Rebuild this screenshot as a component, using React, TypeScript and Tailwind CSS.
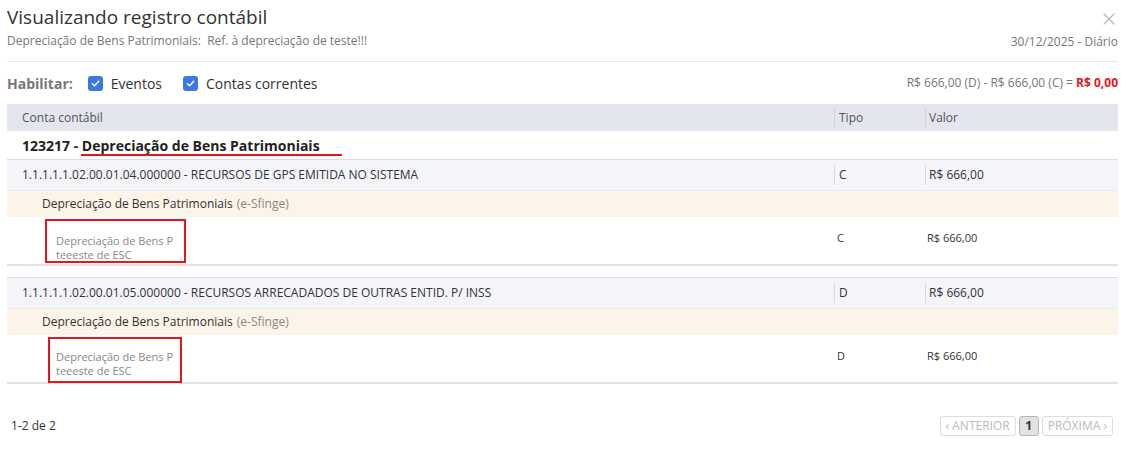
import { X } from "lucide-react";

function Check() {
  return (
    <span className="w-[15px] h-[15px] rounded-[3px] bg-[#3b78e7] flex items-center justify-center">
      <svg width="11" height="11" viewBox="0 0 12 12" fill="none">
        <path d="M2.5 6.2 L5 8.5 L9.5 3.5" stroke="white" strokeWidth="1.6" strokeLinecap="round" strokeLinejoin="round" />
      </svg>
    </span>
  );
}

interface Entry {
  conta: string;
  tipo: string;
  valor: string;
  boxPad: string;
}

const entries: Entry[] = [
  {
    conta: "1.1.1.1.1.02.00.01.04.000000 - RECURSOS DE GPS EMITIDA NO SISTEMA",
    tipo: "C",
    valor: "R$ 666,00",
    boxPad: "ml-[38px] w-[141px] h-[44px] pl-[9px] pt-[13px]",
  },
  {
    conta: "1.1.1.1.1.02.00.01.05.000000 - RECURSOS ARRECADADOS DE OUTRAS ENTID. P/ INSS",
    tipo: "D",
    valor: "R$ 666,00",
    boxPad: "ml-[41px] w-[134px] h-[46px] pl-[6px] pt-[11px]",
  },
];

function EntryBlock({ e, first }: { e: Entry; first: boolean }) {
  return (
    <div className={first ? "" : "mt-[11px] border-t border-[#dcdcdc]"}>
      <div className="grid grid-cols-[827px_91px_1fr] h-[31px] bg-[#f4f5f9] border-b border-[#ebebeb] text-[12px] text-[#333] items-center">
        <div className="pl-[15px]">{e.conta}</div>
        <div className="flex items-center h-full">
          <div className="border-l border-[#d8d8d8] h-[20px]" />
          <span className="pl-[4px]">{e.tipo}</span>
        </div>
        <div className="flex items-center h-full">
          <div className="border-l border-[#d8d8d8] h-[20px]" />
          <span className="pl-[3px]">{e.valor}</span>
        </div>
      </div>
      <div className="h-[26px] bg-[#fcf4e8] flex items-center pl-[35px] text-[12px] text-[#333]">
        Depreciação de Bens Patrimoniais<span className="text-[#888] ml-[4px]">(e-Sfinge)</span>
      </div>
      <div className="grid grid-cols-[827px_91px_1fr] h-[49px] border-b-2 border-[#e2e2e2]">
        <div className="pt-[2px]">
          <div className={`${e.boxPad} border-2 border-[#e8141b] text-[11px] leading-[14px] text-[#888]`}>
            <div>Depreciação de Bens P</div>
            <div>teeeste de ESC</div>
          </div>
        </div>
        <div className="pt-[13px] pl-[3px] text-[11px] text-[#333]">{e.tipo}</div>
        <div className="pt-[13px] pl-[2px] text-[11px] text-[#333]">{e.valor}</div>
      </div>
    </div>
  );
}

export default function App() {
  return (
    <div className="w-[1125px] h-[455px] bg-white font-['Open_Sans',sans-serif] text-[#333] px-[7px] overflow-hidden">
      {/* Header */}
      <div className="flex justify-between items-start h-[62px] border-b border-[#e8e8e8]">
        <div className="pt-[4px]">
          <div className="text-[19px] leading-[26px] text-[#333]">Visualizando registro contábil</div>
          <div className="text-[12px] leading-[16px] text-[#777] mt-[3px]">
            Depreciação de Bens Patrimoniais:&nbsp; Ref. à depreciação de teste!!!
          </div>
        </div>
        <div className="flex flex-col items-end pt-[9px]">
          <X className="w-[20px] h-[20px] text-[#b8b8b8] -mr-[1px]" strokeWidth={1.5} />
          <div className="text-[12px] leading-[16px] text-[#777] mt-[5px]">30/12/2025 - Diário</div>
        </div>
      </div>

      {/* Habilitar */}
      <div className="flex justify-between items-center h-[42px]">
        <div className="flex items-center text-[14px]">
          <span className="font-bold text-[#777] mr-[15px]">Habilitar:</span>
          <Check />
          <span className="ml-[8px] mr-[21px] text-[#333]">Eventos</span>
          <Check />
          <span className="ml-[8px] text-[#333]">Contas correntes</span>
        </div>
        <div className="text-[12px] text-[#777]">
          R$ 666,00 (D) - R$ 666,00 (C) = <span className="font-bold text-[#e8141b]">R$ 0,00</span>
        </div>
      </div>

      {/* Table header */}
      <div className="grid grid-cols-[827px_91px_1fr] h-[27px] bg-[#e3e5ef] text-[12px] text-[#555] items-center">
        <div className="pl-[15px]">Conta contábil</div>
        <div className="flex items-center h-full">
          <div className="border-l border-[#d0d2dc] h-[20px]" />
          <span className="pl-[4px]">Tipo</span>
        </div>
        <div className="flex items-center h-full">
          <div className="border-l border-[#d0d2dc] h-[20px]" />
          <span className="pl-[3px]">Valor</span>
        </div>
      </div>

      {/* Group row */}
      <div className="relative h-[29px] border-b border-[#dcdcdc] flex items-center pl-[15px] text-[14px] font-bold text-[#222]">
        123217 - Depreciação de Bens Patrimoniais
        <div className="absolute left-[74px] top-[23px] w-[261px] h-[2px] bg-[#e8141b]" />
      </div>

      {entries.map((e, i) => (
        <EntryBlock key={i} e={e} first={i === 0} />
      ))}

      {/* Footer */}
      <div className="flex justify-between items-center mt-[31px] h-[21px]">
        <div className="text-[12px] text-[#333] pl-[4px]">1-2 de 2</div>
        <div className="flex items-center gap-[3px] text-[12px] text-[#bbb] pr-[5px]">
          <div className="h-[20px] px-[5px] border border-[#ddd] rounded-[3px] flex items-center">‹ ANTERIOR</div>
          <div className="h-[20px] w-[20px] border border-[#b5b5b5] bg-[#e2e2e2] rounded-[3px] flex items-center justify-center text-[#333] font-bold">1</div>
          <div className="h-[20px] px-[5px] border border-[#ddd] rounded-[3px] flex items-center">PRÓXIMA ›</div>
        </div>
      </div>
    </div>
  );
}
